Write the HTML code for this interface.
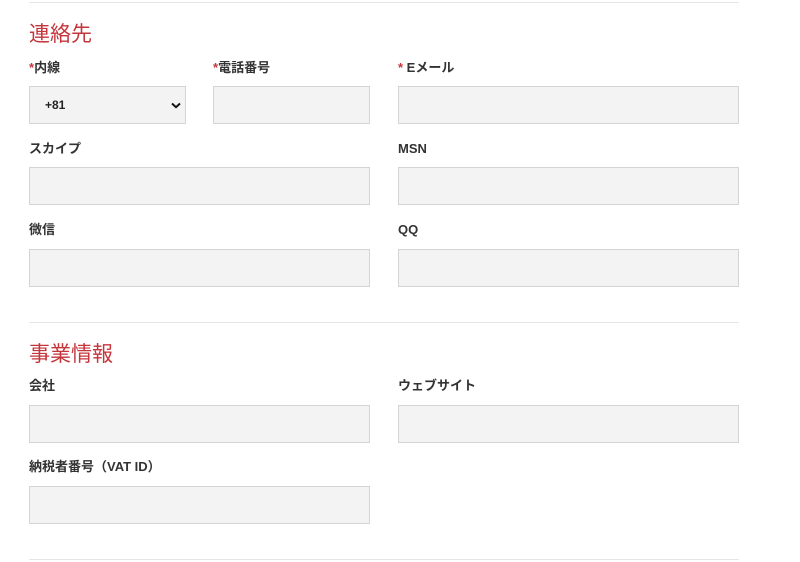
<!DOCTYPE html>
<html><head><meta charset="utf-8"><style>
body{margin:0;width:800px;height:562px;background:#fff;font-family:"Liberation Sans","Noto Sans CJK JP",sans-serif;position:relative;overflow:hidden}
.a{position:absolute}
.hr{position:absolute;left:29px;width:710px;height:1px;background:#e6e6e6}
.h{position:absolute;left:29px;font-size:21px;color:#c4353c;line-height:24px}
.l{position:absolute;font-size:13px;font-weight:bold;color:#333;line-height:14px}
.l b{color:#c4353c}
.i{position:absolute;background:#f3f3f3;border:1px solid #d4d4d4;box-sizing:border-box;height:38px}
</style></head><body>
<div class="hr" style="top:2px"></div>
<div class="h" style="top:23px">連絡先</div>
<div class="l" style="left:29px;top:61px"><b>*</b>内線</div>
<div class="l" style="left:213px;top:61px"><b>*</b>電話番号</div>
<div class="l" style="left:398px;top:61px"><b>* </b>Eメール</div>
<div class="i" style="left:29px;top:86px;width:157px"><span class="a" style="left:15px;top:11px;font-size:12px;font-weight:bold;color:#222">+81</span>
<svg class="a" style="left:141px;top:15px" width="10" height="7" viewBox="0 0 10 7"><path d="M1 1.5L5 5.2L9 1.5" stroke="#111" stroke-width="2" fill="none"/></svg></div>
<div class="i" style="left:213px;top:86px;width:157px"></div>
<div class="i" style="left:398px;top:86px;width:341px"></div>
<div class="l" style="left:29px;top:142px">スカイプ</div>
<div class="l" style="left:398px;top:142px">MSN</div>
<div class="i" style="left:29px;top:167px;width:341px"></div>
<div class="i" style="left:398px;top:167px;width:341px"></div>
<div class="l" style="left:29px;top:223px">微信</div>
<div class="l" style="left:398px;top:223px">QQ</div>
<div class="i" style="left:29px;top:249px;width:341px"></div>
<div class="i" style="left:398px;top:249px;width:341px"></div>
<div class="hr" style="top:322px"></div>
<div class="h" style="top:343px">事業情報</div>
<div class="l" style="left:29px;top:379px">会社</div>
<div class="l" style="left:398px;top:379px">ウェブサイト</div>
<div class="i" style="left:29px;top:405px;width:341px"></div>
<div class="i" style="left:398px;top:405px;width:341px"></div>
<div class="l" style="left:29px;top:460px">納税者番号（VAT ID）</div>
<div class="i" style="left:29px;top:486px;width:341px"></div>
<div class="hr" style="top:559px"></div>
</body></html>
